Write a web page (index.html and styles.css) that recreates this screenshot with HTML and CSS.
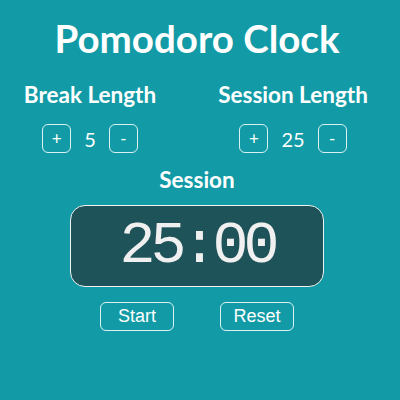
FILE: index.html
```html
<!DOCTYPE html>
<html>
<head>
<meta charset="utf-8">
<link rel="stylesheet" href="styles.css">
</head>
<body>
<main class="app">
  <h1 class="title">Pomodoro Clock</h1>
  <div class="settings">
    <section class="setting">
      <h2 class="label">Break Length</h2>
      <div class="controls">
        <button class="step">+</button>
        <span class="value">5</span>
        <button class="step">-</button>
      </div>
    </section>
    <section class="setting">
      <h2 class="label">Session Length</h2>
      <div class="controls">
        <button class="step">+</button>
        <span class="value">25</span>
        <button class="step">-</button>
      </div>
    </section>
  </div>
  <h2 class="label session-label">Session</h2>
  <div class="clock"><span class="time">25:00</span></div>
  <div class="actions">
    <button class="action">Start</button>
    <button class="action">Reset</button>
  </div>
</main>
</body>
</html>
```
FILE: styles.css
```css
html, body {
  margin: 0;
  padding: 0;
  background: #129ba6;
}
body {
  width: 400px;
  height: 400px;
  font-family: Lato, "Open Sans", sans-serif;
  color: #ffffff;
}
.app {
  width: 394px;
  padding-top: 15px;
  display: flex;
  flex-direction: column;
  align-items: center;
}
.title {
  margin: 0;
  font-size: 38.5px;
  line-height: 1.2;
  font-weight: 700;
}
.settings {
  width: 400px;
  align-self: flex-start;
  margin-top: 20px;
  display: grid;
  grid-template-columns: 180px 214px;
  column-gap: 6px;
}
.setting {
  display: flex;
  flex-direction: column;
  align-items: center;
}
.label {
  margin: 0;
  font-size: 22.5px;
  line-height: 1.2;
  font-weight: 700;
}
.controls {
  margin-top: 16px;
  display: flex;
  align-items: center;
  gap: 13px;
}
.step {
  width: 29px;
  height: 29px;
  box-sizing: border-box;
  padding: 0;
  border: 1px solid rgba(255, 255, 255, 0.85);
  border-radius: 6px;
  background: transparent;
  color: #ffffff;
  font-family: Lato, sans-serif;
  font-size: 17px;
  line-height: 1;
}
.value {
  font-size: 20px;
  min-width: 10px;
  text-align: center;
}
.session-label {
  margin-top: 13px;
}
.clock {
  margin-top: 12px;
  width: 254px;
  height: 82px;
  box-sizing: border-box;
  border: 1.5px solid #f2f2f2;
  border-radius: 15px;
  background: #1e5459;
  display: flex;
  align-items: center;
  justify-content: center;
}
.time {
  font-family: "Liberation Mono", monospace;
  font-size: 60px;
  letter-spacing: -5px;
  line-height: 1;
  color: #f0f0f0;
}
.actions {
  margin-top: 15px;
  display: flex;
  gap: 46px;
}
.action {
  width: 74px;
  height: 29px;
  box-sizing: border-box;
  padding: 0;
  border: 1px solid rgba(255, 255, 255, 0.85);
  border-radius: 6px;
  background: transparent;
  color: #ffffff;
  font-family: "Liberation Sans", Arial, sans-serif;
  font-size: 18px;
}
```
